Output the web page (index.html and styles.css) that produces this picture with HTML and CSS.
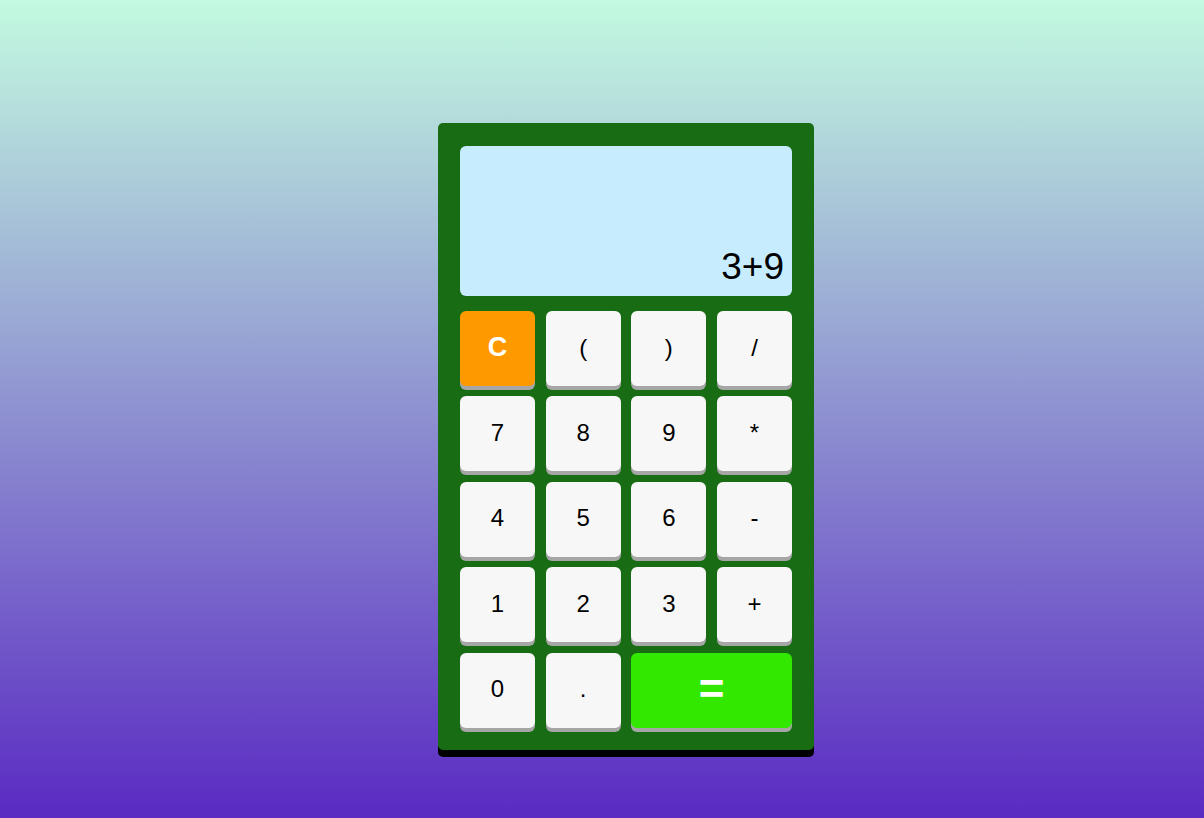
FILE: index.html
```html
<!DOCTYPE html>
<html>
<head>
<meta charset="utf-8">
<link rel="stylesheet" href="styles.css">
</head>
<body>
<div class="calc">
  <div class="display">3+9</div>
  <div class="keys">
    <button class="key clear">C</button>
    <button class="key">(</button>
    <button class="key">)</button>
    <button class="key">/</button>
    <button class="key">7</button>
    <button class="key">8</button>
    <button class="key">9</button>
    <button class="key">*</button>
    <button class="key">4</button>
    <button class="key">5</button>
    <button class="key">6</button>
    <button class="key">-</button>
    <button class="key">1</button>
    <button class="key">2</button>
    <button class="key">3</button>
    <button class="key">+</button>
    <button class="key">0</button>
    <button class="key">.</button>
    <button class="key equals">=</button>
  </div>
</div>
</body>
</html>
```
FILE: styles.css
```css
html, body {
  margin: 0;
  padding: 0;
  height: 100%;
}
body {
  background: linear-gradient(to bottom, #c3fae0, #5a2ac2);
  font-family: "Liberation Sans", Arial, sans-serif;
  overflow: hidden;
}
.calc {
  width: 332px;
  margin: 123px 0 0 438px;
  padding: 23px 22px 22px 22px;
  background: #186c14;
  border-radius: 5px;
  box-shadow: 0 7px 0 #000;
}
.display {
  height: 150px;
  box-sizing: border-box;
  background: #c6ecfe;
  border-radius: 6px;
  display: flex;
  align-items: flex-end;
  justify-content: flex-end;
  padding: 0 8px 8px 0;
  font-size: 37px;
  color: #000;
}
.keys {
  margin-top: 15px;
  display: grid;
  grid-template-columns: repeat(4, 75px);
  grid-auto-rows: 75px;
  column-gap: 10.67px;
  row-gap: 10.4px;
}
.key {
  border: none;
  border-radius: 6px;
  background: #f7f7f7;
  box-shadow: 0 4px 0 #a6a6a6;
  font-family: "Liberation Sans", Arial, sans-serif;
  font-size: 24px;
  color: #000;
  padding: 0 0 2px 0;
}
.clear {
  background: #ff9900;
  color: #fff;
  font-weight: bold;
  font-size: 27px;
}
.equals {
  grid-column: span 2;
  background: #33e800;
  color: #fff;
  font-weight: bold;
  font-size: 44px;
}
```
